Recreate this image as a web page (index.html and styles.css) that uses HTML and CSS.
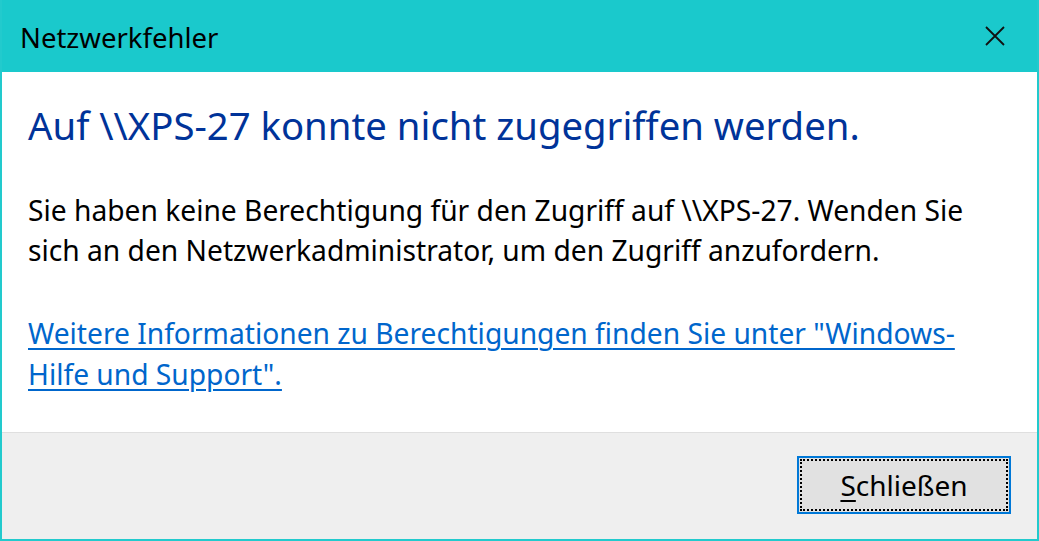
FILE: index.html
```html
<!DOCTYPE html>
<html lang="de">
<head>
<meta charset="utf-8">
<title>Netzwerkfehler</title>
<link rel="stylesheet" href="styles.css">
</head>
<body>
<div class="window">
  <div class="titlebar">
    <span class="title">Netzwerkfehler</span>
    <span class="close" aria-label="Schließen">
      <svg width="20" height="20" viewBox="0 0 20 20"><path d="M1 1 L19 19 M19 1 L1 19" stroke="#111" stroke-width="1.8" fill="none"/></svg>
    </span>
  </div>
  <div class="content">
    <h1 class="instruction">Auf \\XPS-27 konnte nicht zugegriffen werden.</h1>
    <p class="message">Sie haben keine Berechtigung für den Zugriff auf \\XPS-27. Wenden Sie sich an den Netzwerkadministrator, um den Zugriff anzufordern.</p>
    <p class="help"><a href="#" class="link">Weitere Informationen zu Berechtigungen finden Sie unter "Windows-Hilfe und Support".</a></p>
  </div>
  <div class="footer">
    <button class="btn"><span class="focus"><u>S</u>chließen</span></button>
  </div>
</div>
</body>
</html>
```
FILE: styles.css
```css
html, body {
  margin: 0;
  padding: 0;
  width: 1039px;
  height: 541px;
  overflow: hidden;
}
body {
  font-family: "Noto Sans", "Open Sans", sans-serif;
  background: #1ac9cc;
}
.window {
  box-sizing: border-box;
  width: 1039px;
  height: 541px;
  border: 2px solid #22cacd;
  border-top: 0;
  display: flex;
  flex-direction: column;
  background: #1ac9cc;
}
.titlebar {
  height: 72px;
  display: flex;
  align-items: center;
  justify-content: space-between;
  padding: 0 32px 0 18px;
  flex: none;
  box-sizing: border-box;
}
.title {
  font-size: 27.5px;
  color: #000;
  position: relative;
  top: 1px;
}
.close {
  display: flex;
  width: 20px;
  height: 20px;
}
.content {
  background: #fff;
  height: 361px;
  flex: none;
  padding: 29px 45px 0 26px;
  box-sizing: border-box;
  border-bottom: 1px solid #dfdfdf;
}
.instruction {
  margin: 0;
  font-weight: normal;
  font-size: 38.3px;
  line-height: 48px;
  color: #003399;
}
.message {
  margin: 41px 0 0;
  font-size: 28.2px;
  line-height: 40px;
  color: #000;
}
.help {
  margin: 43px 0 0;
  font-size: 28.2px;
  line-height: 41px;
}
.link {
  color: #0066cc;
  text-decoration: underline;
  text-decoration-thickness: 2px;
  text-underline-offset: 4px;
}
.footer {
  flex: 1;
  background: #efefef;
  display: flex;
  justify-content: flex-end;
  align-items: flex-start;
  padding: 23px 26px 0 0;
}
.btn {
  width: 214px;
  height: 58px;
  box-sizing: border-box;
  border: 2px solid #0078d7;
  background: #e1e1e1;
  padding: 1px;
  font-family: inherit;
  font-size: 28px;
  color: #000;
  display: flex;
}
.focus {
  flex: 1;
  border: 2px dotted #000;
  display: flex;
  align-items: center;
  justify-content: center;
}
.focus u {
  text-underline-offset: 4px;
  text-decoration-thickness: 2px;
}
```
